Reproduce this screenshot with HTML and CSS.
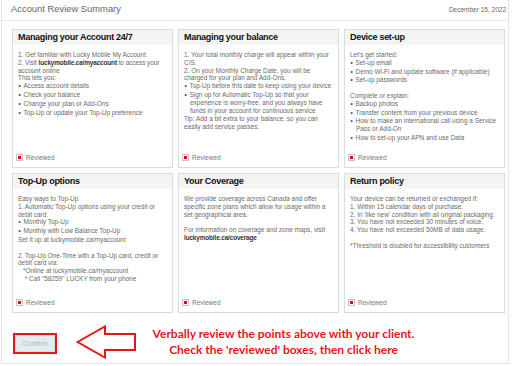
FILE: index.html
```html
<html>
  <head>
    <meta charset="utf-8">
    <link rel="stylesheet" href="styles.css">
  </head>

  <body>
    <div class="panel">
      <div class="panel-head">
        <span class="panel-title">Account Review Summary</span>
        <span class="panel-date">December 15, 2022</span>
      </div>

      <div class="cards">
        <section class="card">
          <h2 class="card-title">Managing your Account 24/7</h2>
          <div class="card-body">
            <p>1. Get familiar with Lucky Mobile My Account.<br>
              <span class="nowrap">2. Visit <b>luckymobile.ca/myaccount</b> to access your</span><br>
              account online<br>
              This lets you:</p>
            <ul>
              <li>Access account details</li>
              <li>Check your balance</li>
              <li>Change your plan or Add-Ons</li>
              <li>Top-Up or update your Top-Up preference</li>
            </ul>
          </div>
          <label class="check"><span class="box"></span>Reviewed</label>
        </section>

        <section class="card">
          <h2 class="card-title">Managing your balance</h2>
          <div class="card-body">
            <p>1. Your total monthly charge will appear within your CIS.<br>
              2. On your Monthly Charge Date, you will be charged for your plan and Add-Ons.</p>
            <ul>
              <li>Top-Up before this date to keep using your device</li>
              <li>Sign up for Automatic Top-Up so that your experience is worry-free, and you always have funds in your account for continuous service</li>
            </ul>
            <p>Tip: Add a bit extra to your balance, so you can easily add service passes.</p>
          </div>
          <label class="check"><span class="box"></span>Reviewed</label>
        </section>

        <section class="card">
          <h2 class="card-title">Device set-up</h2>
          <div class="card-body">
            <p>Let's get started:</p>
            <ul>
              <li>Set-up email</li>
              <li>Demo Wi-Fi and update software (if applicable)</li>
              <li>Set-up passwords</li>
            </ul>
            <p class="gap">Complete or explain:</p>
            <ul>
              <li>Backup photos</li>
              <li>Transfer content from your previous device</li>
              <li>How to make an international call using a Service Pass or Add-On</li>
              <li>How to set-up your APN and use Data</li>
            </ul>
          </div>
          <label class="check"><span class="box"></span>Reviewed</label>
        </section>

        <section class="card">
          <h2 class="card-title">Top-Up options</h2>
          <div class="card-body">
            <p>Easy ways to Top-Up<br>
              1. Automatic Top-Up options using your credit or debit card:</p>
            <ul>
              <li>Monthly Top-Up</li>
              <li>Monthly with Low Balance Top-Up</li>
            </ul>
            <p>Set it up at luckymobile.ca/myaccount</p>
            <p class="gap">2. Top-Up One-Time with a Top-Up card, credit or debit card via:<br>
              <span class="indent">*Online at luckymobile.ca/myaccount</span><br>
              <span class="indent">&nbsp;* Call "58259" LUCKY from your phone</span></p>
          </div>
          <label class="check"><span class="box"></span>Reviewed</label>
        </section>

        <section class="card">
          <h2 class="card-title">Your Coverage</h2>
          <div class="card-body">
            <p>We provide coverage across Canada and offer specific zone plans which allow for usage within a set geographical area.</p>
            <p class="gap">For information on coverage and zone maps, visit <b>luckymobile.ca/coverage</b></p>
          </div>
          <label class="check"><span class="box"></span>Reviewed</label>
        </section>

        <section class="card">
          <h2 class="card-title">Return policy</h2>
          <div class="card-body">
            <p>Your device can be returned or exchanged if:<br>
              1. Within 15 calendar days of purchase.<br>
              2. In 'like new' condition with all original packaging.<br>
              3. You have not exceeded 30 minutes of voice.<br>
              4. You have not exceeded 50MB of data usage.</p>
            <p class="gap">*Threshold is doubled for accessibility customers</p>
          </div>
          <label class="check"><span class="box"></span>Reviewed</label>
        </section>
      </div>

      <div class="actions">
        <div class="confirm-ring">
          <button class="confirm">Confirm</button>
        </div>
        <svg class="arrow" width="61" height="34" viewBox="0 0 61 34">
          <polygon points="1.5,17 29,1.5 29,9 59,9 59,25 29,25 29,32.5"/>
        </svg>
        <p class="note">Verbally review the points above with your client.<br>
          Check the 'reviewed' boxes, then click here</p>
      </div>
    </div>
  </body>
</html>
```

FILE: styles.css
```css
body {
  margin: 0;
  background: #fff;
  font-family: "Liberation Sans", Arial, sans-serif;
}

.panel {
  width: 508px;
  height: 364px;
  margin-left: 1px;
  box-sizing: border-box;
  border: 1px solid #e3e3e3;
  border-top: 0;
}

.panel-head {
  display: flex;
  justify-content: space-between;
  align-items: baseline;
  height: 21px;
  box-sizing: border-box;
  padding: 3px 2px 0 9px;
  border-bottom: 1px solid #ececec;
}

.panel-title {
  font-size: 9.4px;
  line-height: 11px;
  color: #666;
}

.panel-date {
  font-size: 6.5px;
  color: #666;
}

.cards {
  display: grid;
  grid-template-columns: repeat(3, 161px);
  grid-template-rows: 139px 140px;
  gap: 5px;
  padding: 8px 0 0 10px;
}

.card {
  display: flex;
  flex-direction: column;
  border: 1px solid #dcdcdc;
  box-shadow: 0 0 1px rgba(0, 0, 0, 0.08);
}

.card-title {
  margin: 0;
  height: 15px;
  padding: 0 5px;
  background: #f4f4f4;
  font-size: 9px;
  line-height: 15px;
  letter-spacing: -0.3px;
  color: #111;
}

.card-body {
  flex: 1;
  padding: 6px 5px 0;
  font-size: 6.45px;
  line-height: 7.8px;
  color: #6a6a6a;
}

.card-body p {
  margin: 0;
}

.card-body p.gap {
  margin-top: 7.8px;
}

.card-body b {
  letter-spacing: -0.15px;
  color: #333;
}

.nowrap {
  white-space: nowrap;
  letter-spacing: -0.05px;
}

.card-body ul {
  margin: 0;
  padding-left: 6px;
  list-style: none;
}

.card-body li {
  margin-bottom: 1px;
}

.card-body li::before {
  content: "\2022";
  display: inline-block;
  width: 5px;
  margin-left: -5.5px;
  color: #444;
}

.indent {
  padding-left: 5px;
}

.check {
  display: flex;
  align-items: center;
  gap: 3px;
  padding: 0 5px 6px 3px;
  font-size: 6.5px;
  color: #777;
}

.box {
  display: flex;
  align-items: center;
  justify-content: center;
  width: 5px;
  height: 5px;
  border: 1px solid #c4c4c4;
  background: #fff;
}

.box::after {
  content: "";
  width: 3px;
  height: 3px;
  background: #e30613;
}

.actions {
  display: flex;
  align-items: center;
  padding: 12px 0 0 11px;
}

.confirm-ring {
  display: flex;
  width: 44px;
  height: 21px;
  box-sizing: border-box;
  margin-top: 3px;
  border: 2px solid #e8141c;
}

.confirm {
  flex: 1;
  margin: 0;
  padding: 0;
  border: 1px solid #d5dde3;
  background: #e4ecf0;
  font-family: "Liberation Sans", Arial, sans-serif;
  font-size: 7px;
  color: #a9b8c6;
}

.arrow {
  display: block;
  margin-left: 19px;
}

.arrow polygon {
  fill: #fff;
  stroke: #e8141c;
  stroke-width: 2;
  stroke-linejoin: miter;
}

.note {
  width: 275px;
  margin: 0 0 0 9px;
  text-align: center;
  font-family: Lato, sans-serif;
  font-weight: bold;
  font-size: 12px;
  line-height: 16px;
  color: #e8141c;
}
```
